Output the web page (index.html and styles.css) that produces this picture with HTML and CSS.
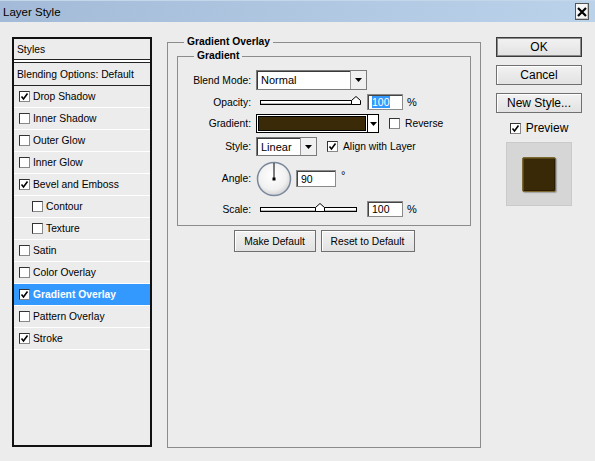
FILE: index.html
```html
<!DOCTYPE html>
<html lang="en">
<head>
  <meta charset="UTF-8">
  <title>Layer Style</title>
  <link rel="stylesheet" href="styles.css">
</head>
<body>

  <div class="window">
    <!-- Barre de titre -->
    <div class="titlebar">
      <span class="title">Layer Style</span>
      <button class="close">
        <svg width="10" height="10" viewBox="0 0 10 10"><path d="M1 1 L9 9 M9 1 L1 9" stroke="#000" stroke-width="2.2"/></svg>
      </button>
    </div>

    <div class="content">
      <!-- Liste des styles -->
      <div class="styles-list">
        <div class="list-head">Styles</div>
        <div class="list-rule"></div>
        <div class="list-blend">Blending Options: Default</div>
        <div class="list-item"><span class="cb"><svg width="9" height="9" viewBox="0 0 9 9"><path d="M1.5 4.5 L3.5 7 L7.5 1.5" fill="none" stroke="#000" stroke-width="1.6"/></svg></span>Drop Shadow</div>
        <div class="list-item"><span class="cb"></span>Inner Shadow</div>
        <div class="list-item"><span class="cb"></span>Outer Glow</div>
        <div class="list-item"><span class="cb"></span>Inner Glow</div>
        <div class="list-item"><span class="cb"><svg width="9" height="9" viewBox="0 0 9 9"><path d="M1.5 4.5 L3.5 7 L7.5 1.5" fill="none" stroke="#000" stroke-width="1.6"/></svg></span>Bevel and Emboss</div>
        <div class="list-item sub"><span class="cb"></span>Contour</div>
        <div class="list-item sub"><span class="cb"></span>Texture</div>
        <div class="list-item"><span class="cb"></span>Satin</div>
        <div class="list-item"><span class="cb"></span>Color Overlay</div>
        <div class="list-item selected"><span class="cb"><svg width="9" height="9" viewBox="0 0 9 9"><path d="M1.5 4.5 L3.5 7 L7.5 1.5" fill="none" stroke="#000" stroke-width="1.6"/></svg></span>Gradient Overlay</div>
        <div class="list-item"><span class="cb"></span>Pattern Overlay</div>
        <div class="list-item"><span class="cb"><svg width="9" height="9" viewBox="0 0 9 9"><path d="M1.5 4.5 L3.5 7 L7.5 1.5" fill="none" stroke="#000" stroke-width="1.6"/></svg></span>Stroke</div>
      </div>

      <!-- Réglages du dégradé -->
      <fieldset class="group outer">
        <legend>Gradient Overlay</legend>
        <fieldset class="group inner">
          <legend>Gradient</legend>
          <div class="form">
            <label>Blend Mode:</label>
            <div class="ctrl">
              <div class="select wide">Normal<span class="arrow"><svg width="7" height="4" viewBox="0 0 7 4"><polygon points="0,0 7,0 3.5,4" fill="#000"/></svg></span></div>
            </div>

            <label>Opacity:</label>
            <div class="ctrl">
              <div class="slider"><span class="thumb" style="left: 100%"><svg width="10" height="9" viewBox="0 0 10 9"><polygon points="0.5,8.5 0.5,4.5 5,0.5 9.5,4.5 9.5,8.5" fill="#fff" stroke="#000"/></svg></span></div>
              <div class="num"><span class="sel">100</span></div>
              <span class="unit">%</span>
            </div>

            <label>Gradient:</label>
            <div class="ctrl">
              <div class="swatch"><span class="fill"></span><span class="arrow"><svg width="7" height="4" viewBox="0 0 7 4"><polygon points="0,0 7,0 3.5,4" fill="#000"/></svg></span></div>
              <span class="cb"></span><span class="cb-label">Reverse</span>
            </div>

            <label>Style:</label>
            <div class="ctrl">
              <div class="select short">Linear<span class="arrow"><svg width="7" height="4" viewBox="0 0 7 4"><polygon points="0,0 7,0 3.5,4" fill="#000"/></svg></span></div>
              <span class="cb"><svg width="9" height="9" viewBox="0 0 9 9"><path d="M1.5 4.5 L3.5 7 L7.5 1.5" fill="none" stroke="#000" stroke-width="1.6"/></svg></span><span class="cb-label">Align with Layer</span>
            </div>

            <label>Angle:</label>
            <div class="ctrl">
              <svg class="dial" width="36" height="36" viewBox="0 0 36 36">
                <defs>
                  <radialGradient id="dialFill" cx="45%" cy="40%" r="60%">
                    <stop offset="0" stop-color="#ffffff"/>
                    <stop offset="0.7" stop-color="#f1f1f1"/>
                    <stop offset="1" stop-color="#d4d4d4"/>
                  </radialGradient>
                </defs>
                <circle cx="18" cy="18" r="16.5" fill="url(#dialFill)" stroke="#7a889c" stroke-width="1.5"/>
                <line x1="18" y1="18" x2="18" y2="2" stroke="#000" stroke-width="1"/>
                <rect x="16.5" y="16.5" width="3" height="3" fill="#000"/>
              </svg>
              <div class="num angle">90</div>
              <span class="degree">°</span>
            </div>

            <label>Scale:</label>
            <div class="ctrl">
              <div class="slider"><span class="thumb" style="left: 62%"><svg width="10" height="9" viewBox="0 0 10 9"><polygon points="0.5,8.5 0.5,4.5 5,0.5 9.5,4.5 9.5,8.5" fill="#fff" stroke="#000"/></svg></span></div>
              <div class="num">100</div>
              <span class="unit">%</span>
            </div>
          </div>
        </fieldset>

        <div class="defaults">
          <button class="btn small make">Make Default</button>
          <button class="btn small reset">Reset to Default</button>
        </div>
      </fieldset>

      <!-- Boutons et aperçu -->
      <div class="actions">
        <button class="btn big default">OK</button>
        <button class="btn big">Cancel</button>
        <button class="btn big">New Style...</button>
        <div class="preview-toggle">
          <span class="cb"><svg width="9" height="9" viewBox="0 0 9 9"><path d="M1.5 4.5 L3.5 7 L7.5 1.5" fill="none" stroke="#000" stroke-width="1.6"/></svg></span>
          <span>Preview</span>
        </div>
        <div class="preview">
          <div class="preview-square"></div>
        </div>
      </div>
    </div>
  </div>

</body>
</html>
```

FILE: styles.css
```css
* {
  box-sizing: border-box;
}
body {
  margin: 0;
  font-family: "Liberation Sans", Arial, sans-serif;
  font-size: 10.3px;
  color: #000;
  background-color: #ececec;
}
.window {
  width: 595px;
  height: 461px;
  background-color: #ececec;
  overflow: hidden;
}
.titlebar {
  height: 22px;
  display: flex;
  align-items: center;
  justify-content: space-between;
  padding: 0 6px 0 3px;
  background: linear-gradient(to right, #a3bbd8, #b2c9e3 60%, #bad2ea);
  border-top: 1px solid #c4d6ea;
}
.title {
  font-size: 11.5px;
}
.close {
  width: 14px;
  height: 17px;
  padding: 0;
  display: flex;
  align-items: center;
  justify-content: center;
  background-color: #f6f6f6;
  border: 1px solid #555;
  box-shadow: inset -1px -1px 0 #c8c8c8;
}
.content {
  display: flex;
  align-items: flex-start;
  gap: 15px;
  padding: 15px 0 0 12px;
}

/* liste des styles */
.styles-list {
  width: 140px;
  height: 410px;
  border: 2px solid #111;
  display: flex;
  flex-direction: column;
}
.list-head {
  height: 21px;
  padding-left: 3px;
  display: flex;
  align-items: center;
  border-bottom: 1px solid #222;
}
.list-rule {
  height: 2px;
  background-color: #fff;
}
.list-blend {
  height: 24px;
  padding-left: 3px;
  display: flex;
  align-items: center;
  border-top: 1px solid #222;
  border-bottom: 1px solid #222;
}
.list-item {
  height: 22px;
  padding: 0 0 1px 5px;
  display: flex;
  align-items: center;
  gap: 3px;
  border-bottom: 1px solid #fff;
}
.list-item.sub {
  padding-left: 18px;
}
.list-item.selected {
  background-color: #3399ff;
  color: #fff;
  font-weight: bold;
}
.cb {
  width: 11px;
  height: 11px;
  flex: none;
  display: inline-flex;
  align-items: center;
  justify-content: center;
  background-color: #fff;
  border: 1px solid #333;
  border-right-color: #888;
  border-bottom-color: #888;
}

/* groupes */
.group {
  margin: 0;
  border: 1px solid #8c8c8c;
}
.group legend {
  font-weight: bold;
  line-height: 12px;
  padding: 0 3px;
}
.outer {
  width: 314px;
  height: 412px;
  margin-top: -1px;
  padding: 0 9px;
}
.outer > legend {
  margin-left: 7px;
}
.inner {
  margin-top: 2px;
  padding: 0;
}
.inner > legend {
  margin-left: 16px;
}
.form {
  display: grid;
  grid-template-columns: 73px 1fr;
  grid-template-rows: 20px 16px 19px 19px 37px 16px;
  column-gap: 5px;
  row-gap: 4px;
  padding: 8px 0 8px;
}
.form label {
  display: flex;
  align-items: center;
  justify-content: flex-end;
}
.ctrl {
  display: flex;
  align-items: center;
}
.select {
  height: 100%;
  display: flex;
  align-items: center;
  justify-content: space-between;
  padding-left: 4px;
  background-color: #fff;
  border: 1px solid #7a7a7a;
  box-shadow: inset 1px 1px 0 #3a3a3a;
  font-size: 11px;
}
.select.wide {
  width: 111px;
}
.select.short {
  width: 61px;
}
.arrow {
  width: 16px;
  height: 100%;
  display: flex;
  align-items: center;
  justify-content: center;
  background-color: #f0f0f0;
  border-left: 1px solid #9a9a9a;
}
.slider {
  position: relative;
  width: 97px;
  height: 5px;
  margin-left: 4px;
  background-color: #fff;
  border: 1px solid #000;
  box-shadow: inset 0 -1px 0 #bbb;
}
.thumb {
  position: absolute;
  top: -5px;
  margin-left: -5px;
  line-height: 0;
}
.num {
  width: 36px;
  height: 100%;
  display: flex;
  align-items: center;
  padding-left: 4px;
  margin-left: 10px;
  background-color: #fff;
  border: 1px solid #8a8a8a;
  box-shadow: inset 1px 1px 0 #444;
  font-size: 10.5px;
}
.sel {
  background-color: #3399ff;
  color: #fff;
}
.unit {
  margin-left: 4px;
  font-size: 11px;
}
.swatch {
  width: 123px;
  height: 100%;
  display: flex;
  border: 1px solid #000;
  background-color: #fff;
}
.swatch .fill {
  flex: 1;
  background-color: #3b2a08;
  border: 1px solid #fff;
  outline: 1px solid #000;
  outline-offset: -2px;
}
.swatch .arrow {
  width: 11px;
  background-color: #fff;
  border-left: 1px solid #000;
}
.ctrl .cb {
  margin-left: 10px;
}
.cb-label {
  margin-left: 5px;
}
.dial {
  display: block;
}
.num.angle {
  width: 40px;
  height: 17px;
  margin-left: 4px;
}
.degree {
  align-self: flex-start;
  margin: 9px 0 0 5px;
  font-size: 11px;
}
.defaults {
  display: flex;
  justify-content: center;
  gap: 5px;
  margin-top: 4px;
}

/* boutons */
.btn {
  font-family: "Liberation Sans", Arial, sans-serif;
  color: #000;
  background: linear-gradient(#f2f2f2, #e2e2e2);
  border: 1px solid #707070;
  box-shadow: inset 1px 1px 0 #fff;
  padding: 0;
}
.btn.small {
  height: 22px;
  font-size: 10.3px;
}
.btn.make {
  width: 82px;
}
.btn.reset {
  width: 94px;
}
.actions {
  width: 86px;
  display: flex;
  flex-direction: column;
  align-items: center;
  gap: 8px;
}
.btn.big {
  width: 86px;
  height: 20px;
  font-size: 12px;
}
.btn.default {
  border: 1px solid #3a3a3a;
  box-shadow: inset 0 0 0 1px #8a8a8a;
}
.preview-toggle {
  display: flex;
  align-items: center;
  gap: 5px;
  font-size: 12px;
}
.preview {
  width: 66px;
  height: 64px;
  margin-top: -1px;
  display: flex;
  align-items: center;
  justify-content: center;
  background-color: #d6d6d6;
  border: 1px solid #cacaca;
}
.preview-square {
  width: 34px;
  height: 35px;
  background-color: #3a2906;
  border: 1px solid #7d6a32;
  border-radius: 2px;
  box-shadow: inset 1px 1px 0 #5a4818, inset -1px -1px 0 #2a1c02, 1px 1px 1px rgba(0, 0, 0, 0.25);
}
```
